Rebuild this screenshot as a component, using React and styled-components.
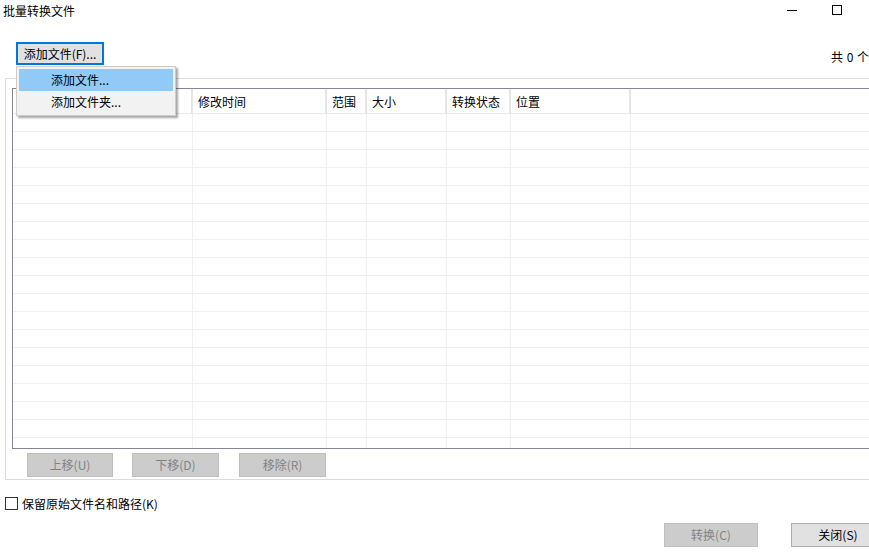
import React from "react";
import styled, { createGlobalStyle } from "styled-components";

const Global = createGlobalStyle`
  html, body { margin: 0; padding: 0; background: #fff; overflow: hidden; }
  body { font-family: "Noto Sans CJK SC", "Noto Sans", sans-serif; font-size: 12px; color: #000; }
  * { box-sizing: border-box; }
`;

const Window = styled.div`
  position: relative;
  width: 897px;
  height: 552px;
  display: flex;
  flex-direction: column;
  background: #fff;
`;

const TitleBar = styled.div`
  height: 30px;
  display: flex;
  align-items: flex-start;
`;

const Title = styled.div`
  padding: 1px 0 0 3px;
  line-height: 20px;
  flex: 1;
`;

const Ctrl = styled.div`
  width: ${(p) => p.$w || 45}px;
  height: 30px;
  display: flex;
  justify-content: center;
  padding-top: ${(p) => p.$top}px;
`;

const MinGlyph = styled.div`
  width: 10px;
  height: 1px;
  background: #000;
`;

const MaxGlyph = styled.div`
  width: 10px;
  height: 10px;
  border: 1px solid #000;
`;

const Toolbar = styled.div`
  margin-top: 12px;
  height: 23px;
  display: flex;
  align-items: flex-start;
  padding: 0 4px 0 16px;
`;

const Button = styled.button`
  font-family: inherit;
  font-size: 12px;
  height: ${(p) => p.$h || 24}px;
  width: ${(p) => p.$w}px;
  padding: 0;
  line-height: 1;
  border: 1px solid ${(p) => (p.$disabled ? "#bfbfbf" : "#adadad")};
  background: ${(p) => (p.$disabled ? "#cccccc" : "#e1e1e1")};
  color: ${(p) => (p.$disabled ? "#838383" : "#000")};
  margin-left: ${(p) => p.$ml || 0}px;
  &.focus {
    border: 2px solid #0078d7;
  }
`;

const Count = styled.div`
  margin-left: auto;
  padding-top: 7px;
  line-height: 16px;
  word-spacing: 1px;
`;

const GroupBox = styled.fieldset`
  margin: 13px 5px 0 5px;
  border: 1px solid #dcdcdc;
  padding: 0 6px 2px 6px;
  min-width: 0;
  position: relative;
  & > legend {
    padding: 0;
    margin-left: 7px;
    line-height: 14px;
    height: 0;
    position: relative;
    top: -7px;
  }
`;

const Legend = styled.legend``;

const Content = styled.div`
  padding-top: 9px;
`;

const ListView = styled.div`
  height: 361px;
  border: 1px solid #828790;
  overflow: hidden;
  display: flex;
  flex-direction: column;
`;

const cols = "180px 134px 40px 80px 64px 120px 1fr";

const Header = styled.div`
  display: grid;
  grid-template-columns: ${cols};
  height: 25px;
  border-bottom: 1px solid #eaeaea;
  flex-shrink: 0;
`;

const HeadCell = styled.div`
  padding: 4px 0 0 5px;
  line-height: 18px;
  border-right: 2px solid #e5e5e5;
  white-space: nowrap;
`;

const Row = styled.div`
  display: grid;
  grid-template-columns: ${cols};
  height: 18px;
  border-bottom: 1px solid #f0f0f0;
  flex-shrink: 0;
`;

const Cell = styled.div`
  border-right: 1px solid #f0f0f0;
`;

const MoveBar = styled.div`
  display: flex;
  margin-top: 4px;
  padding-left: 15px;
`;

const CheckRow = styled.label`
  margin: 16px 0 0 5px;
  display: flex;
  align-items: center;
  height: 14px;
`;

const Box = styled.span`
  width: 13px;
  height: 13px;
  border: 1px solid #333;
  background: #fff;
  margin-right: 4px;
`;

const Footer = styled.div`
  margin-top: 13px;
  display: flex;
  padding-left: 664px;
`;

const Menu = styled.div`
  position: absolute;
  left: 16px;
  top: 66px;
  width: 160px;
  height: 50px;
  background: #f2f2f2;
  border: 1px solid #cccccc;
  padding: 2px;
  box-shadow: 2px 2px 2px rgba(0, 0, 0, 0.35);
`;

const MenuItem = styled.div`
  height: 22px;
  line-height: 22px;
  padding-left: 32px;
  width: 154px;
  background: ${(p) => (p.$active ? "#91c9f7" : "transparent")};
`;

const columns = ["文件名", "修改时间", "范围", "大小", "转换状态", "位置", ""];

export default function App() {
  const rows = Array.from({ length: 19 });
  return (
    <>
      <Global />
      <Window>
        <TitleBar>
          <Title>批量转换文件</Title>
          <Ctrl $top={10}><MinGlyph /></Ctrl>
          <Ctrl $top={5}><MaxGlyph /></Ctrl>
          <Ctrl $top={5} $w={38} />
        </TitleBar>
        <Toolbar>
          <Button className="focus" $w={88} $h={23}>添加文件(F)...</Button>
          <Count>共 0 个文件</Count>
        </Toolbar>
        <GroupBox>
          <Legend>请选择文件</Legend>
          <Content>
            <ListView>
              <Header>
                {columns.map((c, i) => (
                  <HeadCell key={i}>{c}</HeadCell>
                ))}
              </Header>
              {rows.map((_, r) => (
                <Row key={r}>
                  {columns.map((_, i) => (
                    <Cell key={i} />
                  ))}
                </Row>
              ))}
            </ListView>
            <MoveBar>
              <Button $disabled $w={86}>上移(U)</Button>
              <Button $disabled $w={87} $ml={19}>下移(D)</Button>
              <Button $disabled $w={87} $ml={20}>移除(R)</Button>
            </MoveBar>
          </Content>
        </GroupBox>
        <CheckRow>
          <Box />
          保留原始文件名和路径(K)
        </CheckRow>
        <Footer>
          <Button $disabled $w={94}>转换(C)</Button>
          <Button $w={94} $ml={33}>关闭(S)</Button>
        </Footer>
        <Menu>
          <MenuItem $active>添加文件...</MenuItem>
          <MenuItem>添加文件夹...</MenuItem>
        </Menu>
      </Window>
    </>
  );
}
